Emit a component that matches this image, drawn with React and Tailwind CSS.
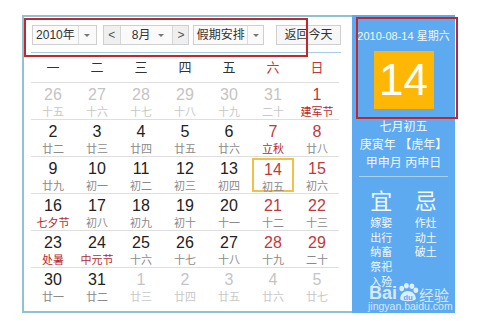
import React from "react";

const rows = [
  [["26","十五","o"],["27","十六","o"],["28","十七","o"],["29","十八","o"],["30","十九","o"],["31","二十","o"],["1","建军节","rh"]],
  [["2","廿二"],["3","廿三"],["4","廿四"],["5","廿五"],["6","廿六"],["7","立秋","rh"],["8","廿八","r"]],
  [["9","廿九"],["10","初一"],["11","初二"],["12","初三"],["13","初四"],["14","初五","sel"],["15","初六","r"]],
  [["16","七夕节","h"],["17","初八"],["18","初九"],["19","初十"],["20","十一"],["21","十二","r"],["22","十三","r"]],
  [["23","处暑","h"],["24","中元节","h"],["25","十六"],["26","十七"],["27","十八"],["28","十九","r"],["29","二十","r"]],
  [["30","廿一"],["31","廿二"],["1","廿三","o"],["2","廿四","o"],["3","廿五","o"],["4","廿六","o"],["5","廿七","o"]],
];

const weeks = ["一","二","三","四","五","六","日"];

function Arrow() {
  return <span className="block w-0 h-0 border-l-[3px] border-r-[3px] border-t-[3px] border-l-transparent border-r-transparent border-t-[#777]" />;
}

function Cell({ d }) {
  const [n, l, t] = d;
  const numCls =
    t === "o" ? "text-[#c4c4c4]" : t === "r" || t === "rh" || t === "sel" ? "text-[#c0393b]" : "text-[#222]";
  const lunCls =
    t === "o" ? "text-[#c8c8c8]" : t === "h" || t === "rh" ? "text-[#b8282c]" : "text-[#8a8a8a]";
  const inner = (
    <>
      <div className={`text-[16px] leading-[18px] ${numCls}`} style={{ fontFamily: '"Liberation Sans", Arial, sans-serif' }}>{n}</div>
      <div className={`text-[11px] leading-[14px] mt-[1px] ${lunCls}`}>{l}</div>
    </>
  );
  if (t === "sel") {
    return (
      <div className="flex justify-center pt-[1px]">
        <div className="w-[42px] h-[34px] border-2 border-[#f0c04a] flex flex-col items-center pt-[1px]">{inner}</div>
      </div>
    );
  }
  return <div className="flex flex-col items-center pt-[3px]">{inner}</div>;
}

export default function App() {
  return (
    <div className="relative w-[480px] h-[321px] bg-white overflow-hidden" style={{ fontFamily: '"Liberation Sans", "Noto Sans CJK SC", sans-serif' }}>
      <div className="flex ml-[22px] mt-[15px]">
        {/* Left calendar */}
        <div className="w-[330px] h-[298px] bg-white border-l-2 border-t-2 border-b-2 border-[#8fc3d3] pl-[7px] pr-[11px]">
          {/* header */}
          <div className="flex items-center h-[20px] mt-[8px] text-[12px] text-[#333] ml-[1px]">
            <div className="flex h-[20px] w-[65px] border border-[#cfcfcf] bg-[#fafafa]">
              <div className="flex-1 flex items-center justify-center">2010年</div>
              <div className="w-[18px] border-l border-[#dcdcdc] flex items-center justify-center"><Arrow /></div>
            </div>
            <div className="flex h-[20px] w-[87px] ml-[6px] border border-[#cfcfcf] bg-[#fafafa]">
              <div className="w-[17px] bg-[#efefef] border-r border-[#d6d6d6] flex items-center justify-center text-[#555]">&lt;</div>
              <div className="flex-1 flex items-center pl-[11px]">8月</div>
              <div className="w-[16px] flex items-center justify-center mr-[3px]"><Arrow /></div>
              <div className="w-[16px] bg-[#efefef] border-l border-[#d6d6d6] flex items-center justify-center text-[#555]">&gt;</div>
            </div>
            <div className="flex h-[20px] w-[71px] ml-[4px] border border-[#cfcfcf] bg-[#fafafa]">
              <div className="flex-1 flex items-center justify-center">假期安排</div>
              <div className="w-[16px] border-l border-[#dcdcdc] flex items-center justify-center"><Arrow /></div>
            </div>
            <div className="h-[20px] w-[65px] ml-[12px] border border-[#cfcfcf] bg-[#f7f7f7] flex items-center justify-center">返回今天</div>
          </div>
          <div className="h-[1px] bg-[#a6cde2] mt-[7px]" />
          {/* weekdays */}
          <div className="grid grid-cols-7 w-[308px] h-[29px] items-center text-[13px] text-[#333]">
            {weeks.map((w, i) => (
              <div key={i} className={`text-center ${i >= 5 ? "text-[#c0393b]" : ""}`}>{w}</div>
            ))}
          </div>
          {rows.map((r, i) => (
            <div key={i} className="grid grid-cols-7 w-[308px] h-[37px] border-t border-[#dedede]">
              {r.map((d, j) => <Cell key={j} d={d} />)}
            </div>
          ))}
        </div>
        {/* Right panel */}
        <div className="w-[103px] h-[298px] bg-[#5eaaf0] flex flex-col items-center text-[#f2f8ff]">
          <div className="text-[11px] mt-[14px] leading-[14px]">2010-08-14 星期六</div>
          <div className="w-[60px] h-[58px] bg-[#ffb705] mt-[8px] flex items-center justify-center text-white text-[44px] leading-none" style={{ fontFamily: '"Liberation Sans", Arial, sans-serif' }}>14</div>
          <div className="text-[12px] leading-[18px] mt-[9px] text-center">
            <div>七月初五</div>
            <div>庚寅年 【虎年】</div>
            <div>甲申月 丙申日</div>
          </div>
          <div className="w-[89px] h-[1px] bg-[#a9d0f5] mt-[4px]" />
          <div className="w-[89px] grid grid-cols-2 text-center mt-[12px]">
            <div className="text-[22px] leading-[26px]">宜</div>
            <div className="text-[22px] leading-[26px]">忌</div>
            <div className="text-[11px] leading-[14.7px] mt-[1px]">
              <div>嫁娶</div><div>出行</div><div>纳畜</div><div>祭祀</div><div>入殓</div>
            </div>
            <div className="text-[11px] leading-[14.7px] mt-[1px]">
              <div>作灶</div><div>动土</div><div>破土</div>
            </div>
          </div>
        </div>
      </div>
      {/* watermark */}
      <div className="absolute left-[369px] top-[283px] flex items-end text-white/75">
        <span className="text-[18px] font-bold leading-none">Bai</span>
        <svg width="22" height="19" viewBox="0 0 28 24">
          <g fill="rgba(255,255,255,0.8)">
            <ellipse cx="6" cy="7" rx="3" ry="3.5" />
            <ellipse cx="12" cy="3.5" rx="3" ry="3.5" />
            <ellipse cx="19" cy="4" rx="3" ry="3.5" />
            <ellipse cx="24" cy="9" rx="3" ry="3.5" />
            <path d="M4 20 C4 13 10 10 14 10 C19 10 24 14 24 20 C24 24 4 24 4 20 Z" />
          </g>
          <text x="14" y="21" textAnchor="middle" fontSize="10" fontWeight="bold" fill="#5eaaf0" fontFamily="Liberation Sans">du</text>
        </svg>
        <span className="text-[15px] leading-none" style={{ fontFamily: '"Noto Sans CJK SC", sans-serif' }}>经验</span>
      </div>
      <div className="absolute left-[368px] top-[300px] text-[10.5px] text-white/75 leading-[12px]">jingyan.baidu.com</div>
      {/* red annotation boxes */}
      <div className="absolute left-[24px] top-[18px] w-[284px] h-[39px] border-[2.5px] border-[#c3262d]" />
      <div className="absolute left-[356px] top-[17px] w-[102px] h-[102px] border-[2.5px] border-[#c3262d]" />
    </div>
  );
}
